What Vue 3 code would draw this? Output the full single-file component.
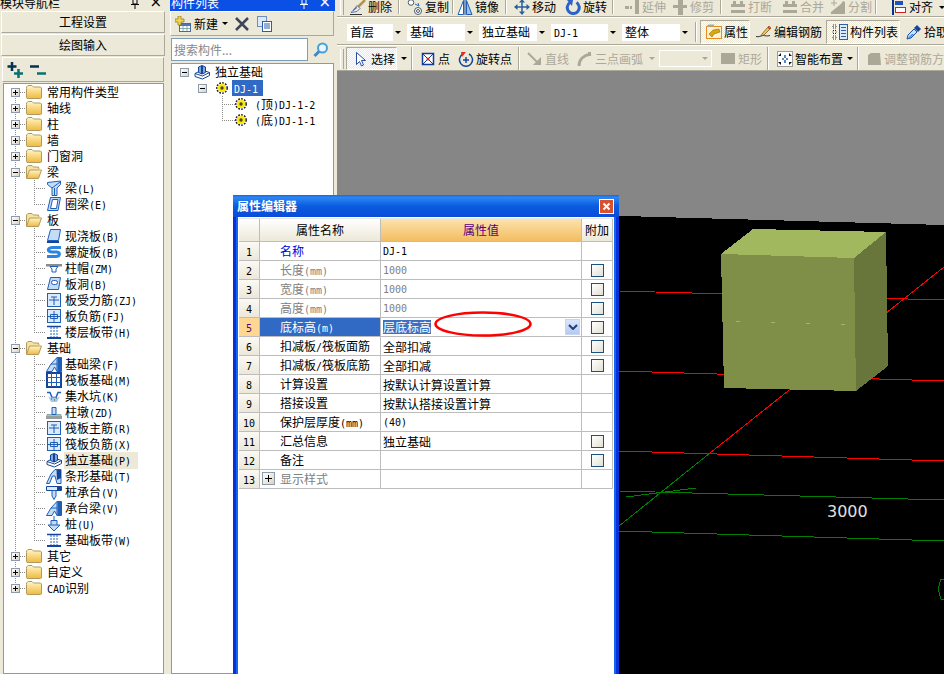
<template>
  <div class="app">
    <svg class="defs" width="0" height="0">
      <defs>
        <linearGradient id="fold" x1="0" y1="0" x2="0" y2="1">
          <stop offset="0" stop-color="#fff6c8" />
          <stop offset="1" stop-color="#f0b93c" />
        </linearGradient>
      </defs>
    </svg>

    <!-- module nav -->
    <aside class="nav">
      <div class="pane-title idle">
        <span>模块导航栏</span>
        <span class="title-btns">
          <svg class="pin" viewBox="0 0 8 10" v-html="icons.pin"></svg>
          <i class="x">×</i>
        </span>
      </div>
      <button class="big">工程设置</button>
      <button class="big">绘图输入</button>
      <div class="nav-tools">
        <svg class="ic" viewBox="0 0 16 16" v-html="icons.addall"></svg>
        <svg class="ic" viewBox="0 0 16 16" v-html="icons.delall"></svg>
      </div>
      <div class="tree nav-tree">
        <div v-for="r in navRows" :key="r.key" class="row">
          <template v-if="r.root">
            <span class="trunk hz" :class="{ first: r.first, last: r.last }">
              <i class="exp" :class="{ plus: !r.open }"></i>
            </span>
            <svg class="folder" viewBox="0 0 16 14" v-html="r.open ? icons.open : icons.closed"></svg>
            <span class="lbl root-lbl"><T :s="r.label" /></span>
          </template>
          <template v-else>
            <span class="trunk"></span>
            <span class="stem" :class="{ last: r.last }"></span>
            <svg class="ic" viewBox="0 0 16 16" v-html="icons[r.icon]"></svg>
            <span class="lbl child-lbl" :class="{ cur: r.cur }"><T :s="r.label" /></span>
          </template>
        </div>
      </div>
    </aside>

    <!-- component list -->
    <aside class="list">
      <div class="pane-title active">
        <span>构件列表</span>
        <span class="title-btns">
          <svg class="pin light" viewBox="0 0 8 10" v-html="icons.pin"></svg>
          <i class="x">×</i>
        </span>
      </div>
      <div class="list-tools">
        <svg class="ic" viewBox="0 0 16 16" v-html="icons.newitem"></svg>
        <span class="new-lbl">新建</span>
        <i class="caret"></i>
        <svg class="ic del" viewBox="0 0 16 16" v-html="icons.cross"></svg>
        <svg class="ic" viewBox="0 0 16 16" v-html="icons.dup"></svg>
      </div>
      <div class="search">
        <input placeholder="搜索构件..." />
        <span class="search-btn">
          <svg class="ic" viewBox="0 0 16 16" v-html="icons.lens"></svg>
        </span>
      </div>
      <div class="tree list-tree">
        <div class="row">
          <span class="ind8"><i class="exp"></i></span>
          <svg class="ic" viewBox="0 0 16 16" v-html="icons.isolated"></svg>
          <span class="lbl l-root">独立基础</span>
        </div>
        <div class="row">
          <span class="ind"></span>
          <span class="ind4"><i class="exp"></i></span>
          <svg class="gear" viewBox="0 0 12 12" v-html="icons.gear"></svg>
          <span class="lbl l-sel"><T s="DJ-1" /></span>
        </div>
        <div v-for="(c, i) in listKids" :key="c" class="row">
          <span class="ind"></span>
          <span class="ind"></span>
          <span class="stem2" :class="{ last: i === listKids.length - 1 }"></span>
          <svg class="gear" viewBox="0 0 12 12" v-html="icons.gear"></svg>
          <span class="lbl l-kid"><T :s="c" /></span>
        </div>
      </div>
    </aside>

    <!-- main area -->
    <main class="main">
      <div class="bar bar1">
        <i class="grip"></i>
        <template v-for="(t, i) in bar1" :key="i">
          <i v-if="t.sep" class="sep"></i>
          <span v-else class="tb" :class="{ dis: t.dis }" :style="{ width: t.w + 'px', paddingLeft: t.p + 'px' }">
            <svg class="ic" viewBox="0 0 16 16" v-html="icons[t.icon]"></svg>
            <span class="tb-txt">{{ t.label }}</span>
            <i v-if="t.caret" class="caret after"></i>
          </span>
        </template>
      </div>

      <div class="bar bar2">
        <span v-for="c in combos" :key="c.t" class="combo" :style="{ width: c.w + 'px' }">
          <span class="combo-txt"><T :s="c.t" /></span>
          <span class="combo-arrow"><i class="caret"></i></span>
        </span>
        <i class="sep sep2"></i>
        <span class="tb pressed wide-50"><svg class="ic" viewBox="0 0 16 16" v-html="icons.prop"></svg><span class="tb-txt">属性</span></span>
        <span class="tb wide-76"><svg class="ic" viewBox="0 0 16 16" v-html="icons.edit"></svg><span class="tb-txt">编辑钢筋</span></span>
        <span class="tb pressed wide-74"><svg class="ic" viewBox="0 0 16 16" v-html="icons.lst"></svg><span class="tb-txt">构件列表</span></span>
        <span class="tb wide-50"><svg class="ic" viewBox="0 0 16 16" v-html="icons.drop"></svg><span class="tb-txt">拾取构件</span></span>
      </div>

      <div class="bar bar3">
        <i class="grip g3"></i>
        <template v-for="(t, i) in bar3" :key="i">
          <i v-if="t.sep" class="sep"></i>
          <i v-else-if="t.arrow" class="arrow-cell" :class="{ dis: t.dis }"><i class="caret"></i></i>
          <span v-else-if="t.box" class="dis-combo"><i class="caret"></i></span>
          <span v-else class="tb" :class="{ dis: t.dis, pressed: t.on }" :style="{ width: t.w + 'px', paddingLeft: t.p + 'px' }">
            <svg class="ic" viewBox="0 0 16 16" v-html="icons[t.icon]"></svg>
            <span class="tb-txt">{{ t.label }}</span>
          </span>
        </template>
      </div>

      <div class="scene">
        <svg class="scene-svg" viewBox="337 71 607 603" width="607" height="603">
          <polygon points="337,208 944,225 944,674 337,674" fill="#000" shape-rendering="crispEdges" />
          <g fill="none" stroke-width="1" shape-rendering="crispEdges">
            <g stroke="#f00">
              <line x1="619" y1="291" x2="944" y2="300" />
              <line x1="619" y1="371" x2="944" y2="381" />
              <line x1="619" y1="451" x2="944" y2="461" />
              <line x1="944" y1="267" x2="710" y2="453" />
            </g>
            <g stroke="#008000">
              <line x1="710" y1="453" x2="619" y2="526" />
              <line x1="619" y1="491" x2="944" y2="500" />
              <line x1="619" y1="531" x2="944" y2="541" />
              <line x1="626" y1="497" x2="696" y2="488" />
              <polyline points="944,579 941,579 938,589 941,599 944,600" />
            </g>
          </g>
          <g shape-rendering="crispEdges">
            <polygon points="721,254 753,229 886,232 854,258" fill="#a2b85f" />
            <polygon points="721,254 854,258 856,391 724,388" fill="#7f8f48" />
            <polygon points="854,258 886,232 888,366 856,391" fill="#68763c" />
            <path d="M736 321h4M771 322h4M806 323h4M841 324h4" stroke="#a2b85f" />
          </g>
          <text x="827" y="517" class="dim">3000</text>
        </svg>
      </div>
    </main>

    <!-- property editor window -->
    <section class="dialog">
      <header class="dlg-title">
        <span>属性编辑器</span>
        <i class="dlg-close">
          <svg viewBox="0 0 13 13" width="13" height="13"><path d="M3.5 3.5l6 6M9.5 3.5l-6 6" stroke="#fff" stroke-width="2" /></svg>
        </i>
      </header>
      <div class="dlg-body">
        <div class="grid">
          <div class="cell head"></div>
          <div class="cell head center">属性名称</div>
          <div class="cell head center hot">属性值</div>
          <div class="cell head center">附加</div>

          <template v-for="p in props_" :key="p.n">
            <div class="cell idx" :class="{ 'idx-on': p.on }"><T :s="String(p.n)" /></div>
            <div class="cell name" :class="{ blue: p.blue, gray: p.gray, 'name-on': p.on }">
              <i v-if="p.more" class="exp plus big-exp"></i>
              <T :s="p.name" />
            </div>
            <div class="cell val" :class="{ gray: p.gray }">
              <template v-if="p.on">
                <span class="picked">{{ p.val }}</span>
                <i class="drop-btn">
                  <svg viewBox="0 0 10 6" width="10" height="6"><path d="M1 1l4 4 4-4" fill="none" stroke="#1f3f78" stroke-width="2" /></svg>
                </i>
              </template>
              <T v-else :s="p.val" />
            </div>
            <div class="cell add">
              <i v-if="p.check" class="check"></i>
            </div>
          </template>
        </div>
      </div>
      <svg class="mark" viewBox="0 0 100 28" width="100" height="28">
        <ellipse cx="50" cy="14" rx="47.5" ry="11.5" fill="none" stroke="#f00" stroke-width="2.5" />
      </svg>
    </section>
  </div>
</template>

<script setup>
import { h } from 'vue'

// latin bits get the small mono face, same as the bitmap font in the app
const parts = (s) => s.match(/[\x00-\x7f]+|[^\x00-\x7f]+/g) || []
const T = (props) =>
  parts(props.s).map((p) => h('span', { class: /^[\x00-\x7f]/.test(p) ? 'la' : '' }, p))
T.props = ['s']

const groups = [
  { label: '常用构件类型' },
  { label: '轴线' },
  { label: '柱' },
  { label: '墙' },
  { label: '门窗洞' },
  { label: '梁', kids: [['梁(L)', 'beam'], ['圈梁(E)', 'ring']] },
  {
    label: '板',
    kids: [
      ['现浇板(B)', 'slab'],
      ['螺旋板(B)', 'spiral'],
      ['柱帽(ZM)', 'cap'],
      ['板洞(B)', 'hole'],
      ['板受力筋(ZJ)', 'rebar'],
      ['板负筋(FJ)', 'neg'],
      ['楼层板带(H)', 'band']
    ]
  },
  {
    label: '基础',
    kids: [
      ['基础梁(F)', 'fbeam'],
      ['筏板基础(M)', 'raft'],
      ['集水坑(K)', 'pit'],
      ['柱墩(ZD)', 'pier'],
      ['筏板主筋(R)', 'rebar'],
      ['筏板负筋(X)', 'neg'],
      ['独立基础(P)', 'isolated', true],
      ['条形基础(T)', 'strip'],
      ['桩承台(V)', 'pcap'],
      ['承台梁(V)', 'fbeam'],
      ['桩(U)', 'pile'],
      ['基础板带(W)', 'band']
    ]
  },
  { label: '其它' },
  { label: '自定义' },
  { label: 'CAD识别' }
]

const navRows = []
groups.forEach((g, i) => {
  navRows.push({
    key: g.label,
    root: true,
    label: g.label,
    open: !!g.kids,
    first: i === 0,
    last: i === groups.length - 1
  })
  ;(g.kids || []).forEach((k, j) => {
    navRows.push({
      key: g.label + j,
      label: k[0],
      icon: k[1],
      cur: k[2],
      last: j === g.kids.length - 1
    })
  })
})

const listKids = ['(顶)DJ-1-2', '(底)DJ-1-1']

const bar1 = [
  { icon: 'del', label: '删除', w: 52, p: 4 },
  { sep: 1 },
  { icon: 'copy', label: '复制', w: 52, p: 7 },
  { sep: 1 },
  { icon: 'mirror', label: '镜像', w: 51, p: 3 },
  { sep: 1 },
  { icon: 'move', label: '移动', w: 56, p: 7 },
  { icon: 'rot', label: '旋转', w: 49, p: 2 },
  { sep: 1 },
  { icon: 'ext', label: '延伸', w: 56, p: 10, dis: 1 },
  { icon: 'trim', label: '修剪', w: 50, p: 2, dis: 1 },
  { sep: 1 },
  { icon: 'brk', label: '打断', w: 56, p: 8, dis: 1 },
  { icon: 'mrg', label: '合并', w: 49, p: 4, dis: 1 },
  { icon: 'split', label: '分割', w: 48, p: 3, dis: 1 },
  { sep: 1 },
  { icon: 'align', label: '对齐', w: 62, p: 14, caret: 1 }
]

const combos = [
  { t: '首层', w: 56 },
  { t: '基础', w: 68 },
  { t: '独立基础', w: 68 },
  { t: 'DJ-1', w: 67 },
  { t: '整体', w: 68 }
]

const bar3 = [
  { icon: 'cursor', label: '选择', w: 51, p: 6, on: 1 },
  { arrow: 1 },
  { sep: 1 },
  { icon: 'point', label: '点', w: 39, p: 7 },
  { icon: 'rotpt', label: '旋转点', w: 66, p: 6 },
  { sep: 1 },
  { icon: 'line', label: '直线', w: 51, p: 7, dis: 1 },
  { icon: 'arc', label: '三点画弧', w: 74, p: 6, dis: 1 },
  { arrow: 1, dis: 1 },
  { box: 1 },
  { icon: 'rect', label: '矩形', w: 55, p: 8, dis: 1 },
  { sep: 1 },
  { icon: 'smart', label: '智能布置', w: 74, p: 8 },
  { arrow: 1 },
  { sep: 1 },
  { icon: 'adj', label: '调整钢筋方向', w: 110, p: 7, dis: 1 }
]

const props_ = [
  { n: 1, name: '名称', val: 'DJ-1', blue: 1 },
  { n: 2, name: '长度(mm)', val: '1000', gray: 1, check: 1 },
  { n: 3, name: '宽度(mm)', val: '1000', gray: 1, check: 1 },
  { n: 4, name: '高度(mm)', val: '1000', gray: 1, check: 1 },
  { n: 5, name: '底标高(m)', val: '层底标高', on: 1, check: 1 },
  { n: 6, name: '扣减板/筏板面筋', val: '全部扣减', check: 1 },
  { n: 7, name: '扣减板/筏板底筋', val: '全部扣减', check: 1 },
  { n: 8, name: '计算设置', val: '按默认计算设置计算' },
  { n: 9, name: '搭接设置', val: '按默认搭接设置计算' },
  { n: 10, name: '保护层厚度(mm)', val: '(40)' },
  { n: 11, name: '汇总信息', val: '独立基础', check: 1 },
  { n: 12, name: '备注', val: '', check: 1 },
  { n: 13, name: '显示样式', val: '', gray: 1, more: 1 }
]

const B = '#1f5fb8'
const L = '#c4dcf7'
const G = '#aca899'
const icons = {
  pin: '<path d="M2 .500V5h4V.500M0 5.500h8M4 6v4" fill="none" stroke="currentColor"/>',
  closed:
    '<path d="M.5 3.5V2L2 .5h4L7.5 2h7l1 1v10l-1 .5H1l-.5-1z" fill="url(#fold)" stroke="#b19a5e"/>',
  open:
    '<path d="M.5 13V2L2 .5h4L7.5 2h5l.5 2" fill="#f7e3a0" stroke="#b19a5e"/><path d="M.5 13.5 3.5 5H15.500l-3 8.500z" fill="url(#fold)" stroke="#b19a5e"/>',
  addall:
    '<path d="M5 0v9M.500 4.500h9" stroke="#035" stroke-width="2.500"/><path d="M11.500 7v9M7 11.500h9" stroke="#087070" stroke-width="2.500"/>',
  delall: '<path d="M0 4.500h9" stroke="#035" stroke-width="2.500"/><path d="M7 11.500h9" stroke="#087070" stroke-width="2.500"/>',
  beam: `<path d="M1.500 2.500 14.500 1v3.500l-3.500 3.500v7.500H6V8L1.500 4.500z" fill="${L}" stroke="${B}"/><path d="M6 8l8-6M8.500 8v7" stroke="${B}"/>`,
  ring: `<path d="M4.500 1.500h10L12 14.500H1.500z" fill="${L}" stroke="${B}"/><path d="M6.500 3.500h5.500L10.500 12.500H4.500z" fill="#fff" stroke="${B}"/>`,
  slab: `<path d="M4.500 1.500h10L12.500 12.500h-11z" fill="${L}" stroke="${B}"/><path d="M1 14h12" stroke="#14459a" stroke-width="2"/>`,
  spiral:
    '<path d="M15 3.500H7C1 3.500 1 8 6 8h4.500c4 0 4 4.500-1 4.500H1" fill="none" stroke="#2a84e0" stroke-width="3"/>',
  cap: `<path d="M0 4h16v2.500H0z" fill="#8b8b8b"/><path d="M4 6.500h8L10 9v3H6V9z" fill="#fff" stroke="${B}"/>`,
  hole: `<path d="M4.500 1.500h10L12.500 13.500h-11z" fill="${L}" stroke="${B}"/><rect x="5.500" y="4.500" width="6" height="4" rx="2" fill="#fff" stroke="${B}"/>`,
  rebar: `<rect x="1.500" y="1.500" width="13" height="13" fill="#dcebfb" stroke="${B}"/><path d="M3 8h10M8 5v8M5 5h6" stroke="${B}" fill="none"/>`,
  neg: `<rect x="1.500" y="1.500" width="13" height="13" fill="#dcebfb" stroke="${B}"/><path d="M4.500 6.500h7v4h-7zM8 3v11M2 8.500h12" stroke="${B}" fill="none"/>`,
  band: '<path d="M1 2.500h14" stroke="#14459a" stroke-width="1.500"/><path d="M1 14h14" stroke="#14459a" stroke-width="2"/><path d="M5 3v10M8 3v10M11 3v10" stroke="#2a6ac0" stroke-dasharray="2 1"/>',
  fbeam: `<path d="M0.500 15.500 5 8 11 1.500h4.500v14H11L8.500 11 6 15.500z" fill="${L}" stroke="${B}"/><path d="M5 8h6V1.500M11 8v7.500" stroke="${B}" fill="none"/><path d="M11.500 2h3.500v13h-3.500z" fill="${B}"/>`,
  raft: `<rect x="1" y="1" width="14" height="14" fill="#fff" stroke="#14459a" stroke-width="2"/><rect x="5.500" y="5.500" width="5" height="5" fill="#fff" stroke="${B}"/><path d="M5.500 1v4M10.500 1v4M5.500 11v4M10.500 11v4M1 5.500h4M1 10.500h4M11 5.500h4M11 10.500h4" stroke="${B}"/>`,
  pit: `<path d="M1 4.500h3l2 5h4l2-5h3" fill="none" stroke="${B}" stroke-width="1.500"/><path d="M2 8l3 6h6l3-6-2 1.500H4z" fill="#a9c7ea"/><path d="M5 11h1M8 12h1M10 10h1" stroke="#456"/>`,
  pier: `<path d="M0 12h16v3H0z" fill="#9b9b9b"/><path d="M1 10.500h14v1.500H1z" fill="#c8d4e4" stroke="#8aa"/><path d="M6 3.500h4v7H6z" fill="${L}" stroke="${B}"/>`,
  isolated: `<path d="M1 9.500 8 6l7.500 2.500v3L8.500 15 1 12.500z" fill="#fff" stroke="#14459a"/><path d="M1 9.500 8.500 12l7-3.500" fill="none" stroke="#14459a"/><path d="M4.500 3 8 1.500 11.500 3v5.500L8 10 4.500 8.500z" fill="#7fa8dc" stroke="#14459a"/><path d="M8 2v8" stroke="#14459a" stroke-width="2"/>`,
  strip: `<path d="M.500 15.500 5 6 9 1.500h6v14H11L9 8H6.500l-3 7.500z" fill="${L}" stroke="${B}"/><path d="M10.500 2h4.500v8l-4 2z" fill="#14459a"/>`,
  pcap: `<path d="M.500 2.500h15v4h-15z" fill="#dcebfb" stroke="#14459a"/><path d="M11 3h4v3h-4z" fill="#14459a"/><path d="M6 6.500h4V12l-2 3.500L6 12z" fill="${L}" stroke="${B}"/>`,
  pile: `<path d="M5 4.500h6v6H5z" fill="${L}" stroke="${B}"/><path d="M8 0v4.500M2 9h12l-6 6z" stroke="${B}" fill="${L}"/>`,
  gear: '<circle cx="6" cy="6" r="5.200" fill="none" stroke="#222" stroke-width="1.500" stroke-dasharray="1.800 1.200"/><circle cx="6" cy="6" r="4" fill="#ffe800"/><circle cx="6" cy="6" r="1.700" fill="#444"/>',
  newitem:
    '<rect x="4.500" y="7.500" width="11" height="8" fill="#fff" stroke="#4a6a9a"/><path d="M5 8h10v2H5z" fill="#4a78c0"/><path d="M8 10v5M12 10v5M5 12.500h10" stroke="#8aa"/><path d="M3 0h3v3h3v3H6v3H3V6H0V3h3z" fill="#f5d34a" stroke="#8a7420" stroke-width=".700"/>',
  cross: '<path d="M2 2l12 12M14 2 2 14" stroke="#3c4658" stroke-width="2.500"/>',
  dup: '<rect x="1.500" y=".500" width="9" height="10" fill="#dce9fa" stroke="#6d8fc0"/><rect x="6.500" y="5.500" width="9" height="10" fill="#fff" stroke="#2f5da8"/><path d="M8 8h6M8 10h6M8 12h6" stroke="#2f5da8"/>',
  lens: '<circle cx="9.500" cy="6" r="4.500" fill="#eaf5ff" stroke="#4aa0d8" stroke-width="2"/><path d="M6 9.500 1.500 14" stroke="#3a8ac8" stroke-width="3"/>',
  del: '<path d="M15 1 8 8" stroke="#b89248" stroke-width="2.500"/><path d="M7 6.500l3 3-3 3-6 1 2.500-2.500z" fill="#dfe8f4" stroke="#3a5f9a" stroke-width=".800"/><path d="M3 11.500l4-3" stroke="#d03020"/><path d="M0 15.500h12" stroke="#333"/>',
  copy: '<circle cx="4" cy="3.500" r="2.800" fill="#fff" stroke="#4a5a6a"/><circle cx="11" cy="12" r="3.500" fill="#fff" stroke="#4a5a6a"/><circle cx="11" cy="12" r="1.500" fill="none" stroke="#4a5a6a"/><path d="M8 5l4 2-1-3" fill="none" stroke="#2a6ab0"/>',
  mirror: `<path d="M1 15.500 6.500 1.500v14z" fill="#fff" stroke="${B}"/><path d="M15 15.500 9.500 1.500v14z" fill="#9cc0ee" stroke="${B}"/><path d="M8 0v16" stroke="#14459a"/>`,
  move: '<path d="M8 2v12M2 8h12" stroke="#2a5f9e" stroke-width="1.500"/><path d="M8 0l3 3.500H5zM8 16l3-3.500H5zM0 8l3.500-3v6zM16 8l-3.500-3v6z" fill="#2a5f9e"/>',
  rot: '<path d="M5 3.500a6 6 0 1 0 6.500 0" fill="none" stroke="#2a62c8" stroke-width="3"/><path d="M2 1l6 0-1 6z" fill="#2a62c8"/>',
  ext: `<path d="M1 7h4v3H1zM6 7h2v3H6zM11 1h4v14h-4z" fill="${G}"/>`,
  trim: `<path d="M1 6h14v3H1zM6 1h5v15H6z" fill="${G}"/>`,
  brk: `<path d="M3 2h3v3h4V2h3v3h2v3H1V5h2zM1 11h14v3H1z" fill="${G}"/>`,
  mrg: `<path d="M3 2h3v3h4V2h3v3h2v3H1V5h2zM1 11h14v3H1z" fill="${G}"/>`,
  split: `<path d="M1 13l5-4 5-4 2-3 2 1v12H1z" fill="${G}"/><path d="M1 4h6M4 1v6" stroke="${G}"/>`,
  align: '<path d="M2 0v16" stroke="#0a2f8c" stroke-width="2"/><rect x="4" y="2" width="8" height="4" fill="#2050c0"/><rect x="4.500" y="8.500" width="10" height="5" fill="#fff" stroke="#d02020"/>',
  prop: '<rect x=".500" y="2.500" width="15" height="12" fill="#fff2cc" stroke="#e88a20"/><path d="M.500 2.500h7l1-2h-6z" fill="#9ab"/><path d="M3 10l4-4 6-1 1 3-6 2-2 3z" fill="#d8a810" stroke="#806000" stroke-width=".500"/>',
  edit: '<path d="M0 12.500c3 1 5-1 7-1s4 1 7 0" fill="none" stroke="#333"/><path d="M6 10 13 2l2 2-7 7-3 1z" fill="#f2c960" stroke="#805018" stroke-width=".800"/><path d="M12 3l2 2" stroke="#d03020" stroke-width="1.500"/>',
  lst: '<rect x="7.500" y=".500" width="8" height="15" fill="#dcebfb" stroke="#2f5da8"/><path d="M9 3.500h5M9 6.500h5M9 9.500h5M9 12.500h5" stroke="#2f5da8"/><path d="M1 1h3v3H1zM1 6.500h3v3H1zM1 12h3v3H1z" fill="#fff" stroke="#223" stroke-dasharray="1 1"/>',
  drop: '<path d="M1 15l1-4 6-6 3 3-6 6z" fill="#c8e0fa" stroke="#2050a0"/><path d="M8 4l3-3 4 4-3 3z" fill="#14459a"/><path d="M2 14l4-4 2 0-4 4z" fill="#2c8ce0"/>',
  cursor: '<path d="M3.500 1.500v12l3-3 2 4.500 2-1-2-4.500h4z" fill="#fff" stroke="#2a4f9a"/>',
  point: '<rect x="2.500" y="2.500" width="11" height="11" fill="#fff" stroke="#123c98" stroke-width="1.500"/><path d="M3 3l10 10M13 3 3 13" stroke="#123c98"/><circle cx="8" cy="8" r="1.500" fill="#e02020"/>',
  rotpt: '<path d="M5 3a6.500 6.500 0 1 0 6 0" fill="none" stroke="#14459a" stroke-width="1.500"/><path d="M8 1H3l1 5z" fill="#e03020"/><path d="M8 6v6M5 9h6" stroke="#14459a" stroke-width="1.500"/>',
  line: `<path d="M1 2l10 10" stroke="${G}" stroke-width="2"/><path d="M14 6v8H6z" fill="${G}"/>`,
  arc: `<path d="M2 15c0-7 5-11 12-12" fill="none" stroke="${G}" stroke-width="3"/><path d="M11 1h3v4h-3z" fill="${G}"/>`,
  rect: `<rect x="1" y="2" width="14" height="11" fill="${G}"/>`,
  smart: '<rect x=".500" y=".500" width="15" height="15" fill="#fff" stroke="#445" stroke-dasharray="1 1"/><path d="M4 2v3H1zM12 2v3h3zM4 14v-3H1zM12 14v-3h3z" fill="#111"/><path d="M8 4v3M8 9v3M5 8h2M9 8h2" stroke="#1f5fb8" stroke-width="1.500"/>',
  adj: `<path d="M2 4l3-2h9l1 12H2z" fill="${G}"/>`
}
</script>

<style scoped>
.app {
  position: relative;
  display: flex;
  width: 944px;
  height: 674px;
  overflow: hidden;
  background: #ece9d8;
  font: 12px/16px "Noto Sans CJK SC", sans-serif;
  color: #000;
}
.defs {
  position: absolute;
}
i {
  font-style: normal;
}
.ic {
  flex: none;
  width: 16px;
  height: 16px;
}

/* panes */
.nav {
  flex: none;
  display: flex;
  flex-direction: column;
  width: 166px;
  height: 674px;
}
.list {
  flex: none;
  display: flex;
  flex-direction: column;
  width: 165px;
  height: 674px;
  margin-left: 4px;
}
.pane-title {
  flex: none;
  display: flex;
  justify-content: space-between;
  height: 11px;
  line-height: 5px;
  overflow: hidden;
}
.pane-title.idle {
  padding-right: 4px;
}
.pane-title.active {
  background: #0a50e4;
  color: #fff;
  padding: 0 4px 0 1px;
}
.title-btns {
  display: flex;
  gap: 10px;
}
.pin {
  flex: none;
  width: 8px;
  height: 10px;
  margin-top: -1px;
}
.x {
  font: 15px/5px "DejaVu Sans", sans-serif;
}
.big {
  flex: none;
  height: 22px;
  margin: 0 1px 1px;
  padding: 0;
  background: #ece9d8;
  border: 1px solid;
  border-color: #fff #aca899 #aca899 #fff;
  font: 12px/20px "Noto Sans CJK SC", sans-serif;
  color: #000;
}
.nav-tools {
  flex: none;
  display: flex;
  gap: 7px;
  align-items: center;
  box-sizing: border-box;
  height: 25px;
  margin: 0 2px 1px 2px;
  padding-left: 4px;
  border: 1px solid;
  border-color: #fff #aca899 #aca899 #fff;
}
.tree {
  flex: 1;
  background: #fff;
  border: 1px solid #7f9db9;
  overflow: hidden;
}
.nav-tree {
  margin: 0 2px 0 3px;
}
.row {
  display: flex;
  align-items: center;
  height: 16px;
  white-space: nowrap;
}
.lbl {
  height: 16px;
  line-height: 15px;
}

/* dotted guides */
.trunk {
  flex: none;
  display: flex;
  align-items: center;
  width: 22px;
  height: 16px;
  padding-left: 7px;
  box-sizing: border-box;
  background: repeating-linear-gradient(to bottom, #8a8a8a 0 1px, transparent 1px 2px) 11px 0 / 1px 100% no-repeat;
}
.trunk.hz {
  background:
    repeating-linear-gradient(to bottom, #8a8a8a 0 1px, transparent 1px 2px) 11px 0 / 1px 100% no-repeat,
    repeating-linear-gradient(to right, #8a8a8a 0 1px, transparent 1px 2px) 16px 8px / 6px 1px no-repeat;
}
.trunk.first {
  background:
    repeating-linear-gradient(to bottom, #8a8a8a 0 1px, transparent 1px 2px) 11px 8px / 1px 8px no-repeat,
    repeating-linear-gradient(to right, #8a8a8a 0 1px, transparent 1px 2px) 16px 8px / 6px 1px no-repeat;
}
.trunk.last {
  background:
    repeating-linear-gradient(to bottom, #8a8a8a 0 1px, transparent 1px 2px) 11px 0 / 1px 8px no-repeat,
    repeating-linear-gradient(to right, #8a8a8a 0 1px, transparent 1px 2px) 16px 8px / 6px 1px no-repeat;
}
.stem {
  flex: none;
  width: 20px;
  height: 16px;
  background:
    repeating-linear-gradient(to bottom, #8a8a8a 0 1px, transparent 1px 2px) 8px 0 / 1px 100% no-repeat,
    repeating-linear-gradient(to right, #8a8a8a 0 1px, transparent 1px 2px) 8px 8px / 12px 1px no-repeat;
}
.stem.last {
  background:
    repeating-linear-gradient(to bottom, #8a8a8a 0 1px, transparent 1px 2px) 8px 0 / 1px 8px no-repeat,
    repeating-linear-gradient(to right, #8a8a8a 0 1px, transparent 1px 2px) 8px 8px / 12px 1px no-repeat;
}

/* expander box */
.exp {
  position: relative;
  flex: none;
  display: block;
  width: 9px;
  height: 9px;
  box-sizing: border-box;
  border: 1px solid #8d9baa;
  background: linear-gradient(135deg, #fff, #d8d4c4);
}
.exp::before {
  content: "";
  position: absolute;
  left: 1px;
  top: 3px;
  width: 5px;
  height: 1px;
  background: #000;
}
.exp.plus::after {
  content: "";
  position: absolute;
  left: 3px;
  top: 1px;
  width: 1px;
  height: 5px;
  background: #000;
}
.folder {
  flex: none;
  width: 16px;
  height: 14px;
}
.root-lbl {
  margin-left: 5px;
}
.child-lbl {
  margin-left: 2px;
  padding: 0 1px;
}
.cur {
  width: 72px;
  height: 17px;
  background: #ece9d8;
}

/* list pane */
.list-tools {
  flex: none;
  display: flex;
  align-items: center;
  box-sizing: border-box;
  height: 25px;
  margin: 0 1px 1px 0;
  padding-left: 4px;
  border: 1px solid;
  border-color: #fff #aca899 #aca899 #fff;
}
.new-lbl {
  margin-left: 3px;
}
.list-tools .caret {
  margin: 0 6px 0 4px;
}
.del {
  margin-right: 6px;
}
.search {
  flex: none;
  display: flex;
  height: 24px;
  margin: 1px 0 1px 1px;
}
.search input {
  width: 137px;
  height: 23px;
  box-sizing: border-box;
  margin: 0;
  padding: 0 2px;
  border: 1px solid #7f9db9;
  font: 12px "Noto Sans CJK SC", sans-serif;
  outline: none;
}
.search input::placeholder {
  color: #888;
}
.search-btn {
  display: flex;
  align-items: center;
  justify-content: center;
  width: 25px;
  height: 23px;
}
.list-tree {
  margin: 0 1px 0 1px;
}
.ind {
  flex: none;
  width: 22px;
}
.ind8 {
  flex: none;
  width: 22px;
  padding-left: 8px;
  box-sizing: border-box;
}
.ind4 {
  flex: none;
  display: block;
  width: 22px;
  padding-left: 4px;
  box-sizing: border-box;
}
.stem2 {
  flex: none;
  width: 19px;
  height: 16px;
  background:
    repeating-linear-gradient(to bottom, #8a8a8a 0 1px, transparent 1px 2px) 6px 0 / 1px 100% no-repeat,
    repeating-linear-gradient(to right, #8a8a8a 0 1px, transparent 1px 2px) 6px 8px / 13px 1px no-repeat;
}
.stem2.last {
  background:
    repeating-linear-gradient(to bottom, #8a8a8a 0 1px, transparent 1px 2px) 6px 0 / 1px 8px no-repeat,
    repeating-linear-gradient(to right, #8a8a8a 0 1px, transparent 1px 2px) 6px 8px / 13px 1px no-repeat;
}
.gear {
  flex: none;
  width: 12px;
  height: 12px;
}
.l-root {
  margin-left: 5px;
}
.l-sel {
  margin-left: 4px;
  width: 31px;
  padding-left: 2px;
  box-sizing: border-box;
  background: #316ac5;
  color: #fff;
}
.l-kid {
  margin-left: 8px;
}

/* toolbars */
.main {
  flex: none;
  display: flex;
  flex-direction: column;
  width: 607px;
  height: 674px;
  margin-left: 2px;
}
.bar {
  flex: none;
  display: flex;
  align-items: center;
  white-space: nowrap;
  overflow: hidden;
}
.bar1 {
  height: 17px;
  padding-bottom: 2px;
  box-sizing: border-box;
  border-bottom: 1px solid #aca899;
  box-shadow: 0 1px 0 #fff;
  margin-bottom: 3px;
}
.bar2 {
  height: 25px;
  box-sizing: border-box;
  padding-left: 10px;
  border-bottom: 1px solid #aca899;
  box-shadow: 0 1px 0 #fff;
  margin-bottom: 1px;
}
.bar3 {
  height: 25px;
  box-sizing: border-box;
  padding-top: 1px;
  border-bottom: 1px solid #aca899;
}
.grip {
  flex: none;
  width: 2px;
  height: 15px;
  margin: 0 2px 0 3px;
  border-left: 1px solid #fff;
  border-right: 1px solid #aca899;
}
.grip.g3 {
  margin-right: 2px;
  height: 20px;
}
.sep {
  flex: none;
  display: block;
  width: 1px;
  height: 100%;
  background: #aca899;
  border-right: 1px solid #fff;
}
.sep2 {
  height: 20px;
  margin: 0 3px 0 5px;
}
.tb {
  flex: none;
  display: flex;
  align-items: center;
  gap: 2px;
  height: 100%;
  box-sizing: border-box;
}
.tb.dis {
  color: #aca899;
}
.tb.pressed {
  background: repeating-conic-gradient(#fff 0 25%, #ece9d8 0 50%) 0 0 / 2px 2px;
  border: 1px solid;
  border-color: #aca899 #fff #fff #aca899;
}
.wide-50,
.wide-76,
.wide-74 {
  padding-left: 6px;
}
.tb.pressed.wide-50,
.tb.pressed.wide-74 {
  padding-left: 5px;
}
.wide-50 {
  width: 50px;
}
.wide-76 {
  width: 76px;
}
.wide-74 {
  width: 74px;
}
.tb-txt {
  flex: none;
}
.caret {
  display: inline-block;
  flex: none;
  width: 0;
  height: 0;
  border: 3px solid transparent;
  border-top: 3px solid #000;
  border-bottom: 0;
}
.caret.after {
  margin-left: 4px;
}
.arrow-cell {
  flex: none;
  display: flex;
  align-items: center;
  justify-content: center;
  width: 14px;
}
.arrow-cell.dis .caret {
  border-top-color: #aca899;
}
.dis-combo {
  flex: none;
  display: flex;
  align-items: center;
  justify-content: flex-end;
  width: 53px;
  height: 17px;
  box-sizing: border-box;
  padding-right: 3px;
  border: 1px solid #fff;
}
.dis-combo .caret {
  border-top-color: #aca899;
}
.combo {
  flex: none;
  display: flex;
  height: 17px;
  margin-right: 4px;
  background: #fff;
}
.combo-txt {
  flex: 1;
  padding-left: 3px;
  line-height: 16px;
}
.combo-arrow {
  flex: none;
  display: flex;
  align-items: center;
  justify-content: center;
  width: 10px;
  background: #ece9d8;
}
.bar2 .combo:nth-child(5) {
  margin-right: 0;
}

/* 3d view, free canvas */
.scene {
  flex: 1;
  position: relative;
  background: #868686;
  overflow: hidden;
}
.scene-svg {
  display: block;
}
.dim {
  font: 16px "DejaVu Sans", sans-serif;
  fill: #e0e0e0;
}

/* floating window */
.dialog {
  position: absolute;
  left: 233px;
  top: 195px;
  box-sizing: border-box;
  width: 386px;
  height: 490px;
  border-left: 3px solid #0831d9;
  border-right: 3px solid #0831d9;
  background: #1565ee;
}
.dlg-title {
  display: flex;
  justify-content: space-between;
  align-items: center;
  height: 22px;
  margin: 0 -3px;
  padding: 0 5px 0 4px;
  background: linear-gradient(#1a68e8, #2c86f2 12%, #0a5ce0 50%, #0a4cd8);
  color: #fff;
  font-weight: 700;
}
.dlg-close {
  display: block;
  width: 13px;
  height: 13px;
  background: #d9502c;
  border: 1px solid #fff;
  box-sizing: content-box;
  margin-right: 0;
  line-height: 0;
}
.dlg-body {
  height: 468px;
  margin: 0 2px;
  padding: 1px 0 0 1px;
  background: #fff;
}
.grid {
  display: grid;
  grid-template-columns: 21px 121px 201px 31px;
  grid-auto-rows: 19px;
  grid-template-rows: 23px;
  border-top: 1px solid #e6e6e6;
}
.cell {
  box-sizing: border-box;
  height: 100%;
  border-right: 1px solid #bdbdbd;
  border-bottom: 1px solid #bdbdbd;
  line-height: 17px;
  white-space: nowrap;
  overflow: hidden;
}
.head {
  line-height: 21px;
  background: linear-gradient(#fff, #ece9d8);
}
.center {
  text-align: center;
}
.hot {
  background: linear-gradient(#fbe3ae, #f3bd60);
  color: #5a0080;
}
.idx {
  text-align: center;
  background: linear-gradient(#faf9f3, #ebe8da);
}
.idx-on {
  background: #ffd792;
  color: #5a0080;
}
.name {
  padding-left: 20px;
}
.name-on {
  background: #316ac5;
  color: #fff;
}
.blue {
  color: #0000e0;
}
.gray {
  color: #808080;
}
.val {
  display: flex;
  align-items: center;
  justify-content: space-between;
  padding: 0 1px 0 2px;
}
.picked {
  background: #3f6fbf;
  color: #fff;
  line-height: 14px;
}
.drop-btn {
  display: flex;
  align-items: center;
  justify-content: center;
  width: 15px;
  height: 16px;
  background: linear-gradient(#dbe6fb, #b4c9f1);
  border: 1px solid #c7d5f2;
  box-sizing: border-box;
}
.add {
  display: flex;
  align-items: center;
  justify-content: center;
}
.check {
  display: block;
  width: 13px;
  height: 13px;
  box-sizing: border-box;
  border: 1px solid #1c5180;
  background: linear-gradient(135deg, #fff, #e2e0d4);
}
.big-exp {
  display: inline-block;
  position: absolute;
  width: 13px;
  height: 13px;
  margin: 2px 0 0 -18px;
}
.big-exp::before {
  left: 2px;
  top: 5px;
  width: 7px;
}
.big-exp.plus::after {
  left: 5px;
  top: 2px;
  height: 7px;
}
.mark {
  position: absolute;
  left: 197px;
  top: 115px;
}
</style>

<style>
body {
  margin: 0;
}
.la {
  font-family: "DejaVu Sans Mono", monospace;
  font-size: 10px;
}
</style>
